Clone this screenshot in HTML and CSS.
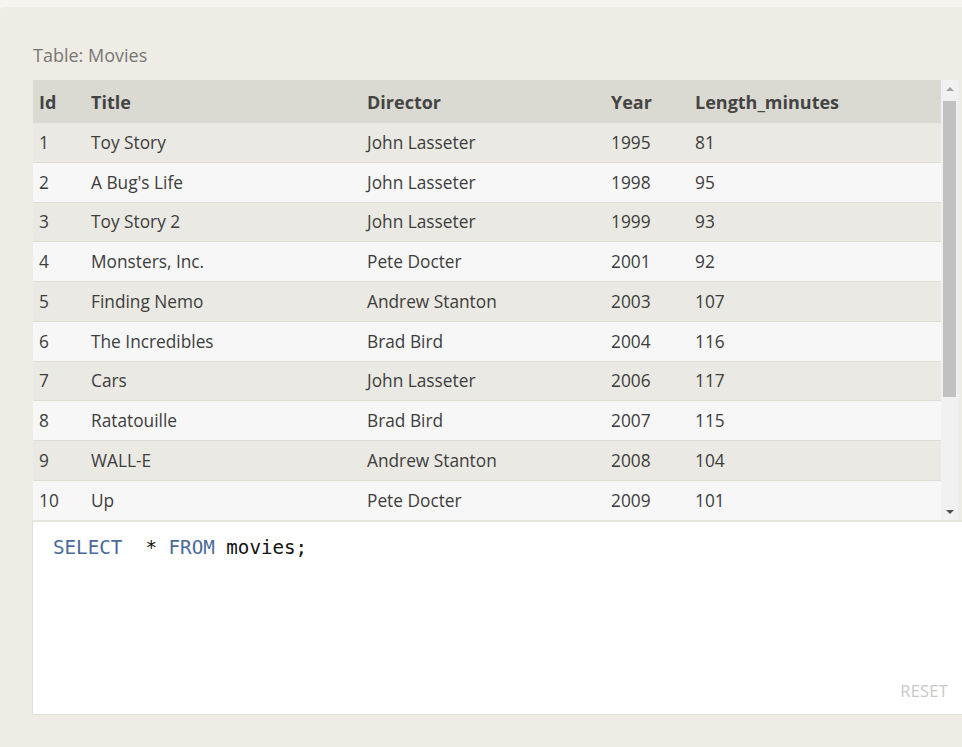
FILE: index.html
```html
<!DOCTYPE html>
<html>
<head>
<meta charset="utf-8">
<link rel="stylesheet" href="styles.css">
</head>
<body>
<div class="panel">
  <div class="caption">Table: Movies</div>
  <div class="results">
    <div class="viewport">
      <table class="grid">
        <colgroup>
          <col class="c-id"><col class="c-title"><col class="c-dir"><col class="c-year"><col class="c-len">
        </colgroup>
        <thead>
          <tr><th>Id</th><th>Title</th><th>Director</th><th>Year</th><th>Length_minutes</th></tr>
        </thead>
        <tbody>
          <tr><td>1</td><td>Toy Story</td><td>John Lasseter</td><td>1995</td><td>81</td></tr>
          <tr><td>2</td><td>A Bug's Life</td><td>John Lasseter</td><td>1998</td><td>95</td></tr>
          <tr><td>3</td><td>Toy Story 2</td><td>John Lasseter</td><td>1999</td><td>93</td></tr>
          <tr><td>4</td><td>Monsters, Inc.</td><td>Pete Docter</td><td>2001</td><td>92</td></tr>
          <tr><td>5</td><td>Finding Nemo</td><td>Andrew Stanton</td><td>2003</td><td>107</td></tr>
          <tr><td>6</td><td>The Incredibles</td><td>Brad Bird</td><td>2004</td><td>116</td></tr>
          <tr><td>7</td><td>Cars</td><td>John Lasseter</td><td>2006</td><td>117</td></tr>
          <tr><td>8</td><td>Ratatouille</td><td>Brad Bird</td><td>2007</td><td>115</td></tr>
          <tr><td>9</td><td>WALL-E</td><td>Andrew Stanton</td><td>2008</td><td>104</td></tr>
          <tr><td>10</td><td>Up</td><td>Pete Docter</td><td>2009</td><td>101</td></tr>
          <tr><td>11</td><td>Toy Story 3</td><td>Lee Unkrich</td><td>2010</td><td>103</td></tr>
          <tr><td>12</td><td>Cars 2</td><td>John Lasseter</td><td>2011</td><td>120</td></tr>
          <tr><td>13</td><td>Brave</td><td>Brenda Chapman</td><td>2012</td><td>102</td></tr>
          <tr><td>14</td><td>Monsters University</td><td>Dan Scanlon</td><td>2013</td><td>110</td></tr>
        </tbody>
      </table>
    </div>
    <div class="scrollbar">
      <div class="arrow up"></div>
      <div class="track"><div class="thumb"></div></div>
      <div class="arrow down"></div>
    </div>
  </div>
  <div class="editor">
    <div class="code"><span class="kw">SELECT</span>  * <span class="kw">FROM</span> movies;</div>
    <div class="reset">RESET</div>
  </div>
</div>
</body>
</html>
```
FILE: styles.css
```css
html, body {
  margin: 0;
  padding: 0;
  background: #f5f4f0;
  overflow: hidden;
}
body {
  padding-top: 7px;
  font-family: "Open Sans", "Noto Sans", sans-serif;
}
.panel {
  background: #efece5;
  border-top-left-radius: 4px;
  padding: 36px 0 0 33px;
  overflow: hidden;
  height: 740px;
  box-sizing: border-box;
}
.caption {
  font-size: 18px;
  color: #777;
  line-height: 24px;
  height: 37px;
}
.results {
  display: flex;
  width: 925px;
  height: 440px;
}
.viewport {
  width: 908px;
  height: 440px;
  overflow: hidden;
}
.grid {
  width: 908px;
  border-collapse: collapse;
  table-layout: fixed;
  color: #3d3d3d;
}
.c-id { width: 52px; }
.c-title { width: 276px; }
.c-dir { width: 244px; }
.c-year { width: 84px; }
.c-len { width: 252px; }
.grid th {
  background: #dbdad2;
  text-align: left;
  font-weight: 700;
  font-size: 18px;
  height: 43px;
  padding: 0 0 0 6px;
  color: #444;
}
.grid td {
  font-size: 17.3px;
  height: 38.75px;
  padding: 0 0 0 6px;
  border-top: 1px solid #dedcd5;
}
.grid tbody tr:nth-child(odd) td { background: #eae9e3; }
.grid tbody tr:nth-child(even) td { background: #f7f7f7; }
.grid tbody tr:first-child td { border-top: none; height: 38.75px; }
.scrollbar {
  width: 17px;
  display: flex;
  flex-direction: column;
  background: #f1f1f1;
}
.arrow {
  height: 17px;
  display: flex;
  align-items: center;
  justify-content: center;
}
.arrow::before {
  content: "";
  border-left: 4px solid transparent;
  border-right: 4px solid transparent;
}
.arrow.up::before { border-bottom: 4px solid #a3a3a3; }
.arrow.down::before { border-top: 4px solid #505050; }
.track {
  flex: 1;
  padding: 4px 2px 0 2px;
}
.thumb {
  height: 296px;
  background: #c1c1c1;
}
.editor {
  width: 940px;
  margin-left: -1px;
  height: 195px;
  background: #fff;
  border: 1px solid #e2e0da;
  border-top: 2px solid #e6e4de;
  position: relative;
  box-sizing: border-box;
}
.code {
  font-family: "DejaVu Sans Mono", "Liberation Mono", monospace;
  font-size: 19.2px;
  color: #111;
  white-space: pre;
  padding: 14px 0 0 20px;
  line-height: 24px;
}
.kw { color: #4a6a9c; }
.reset {
  position: absolute;
  right: 23px;
  bottom: 12px;
  font-size: 16.5px;
  color: #c8c8c8;
  letter-spacing: 0.2px;
}
```
